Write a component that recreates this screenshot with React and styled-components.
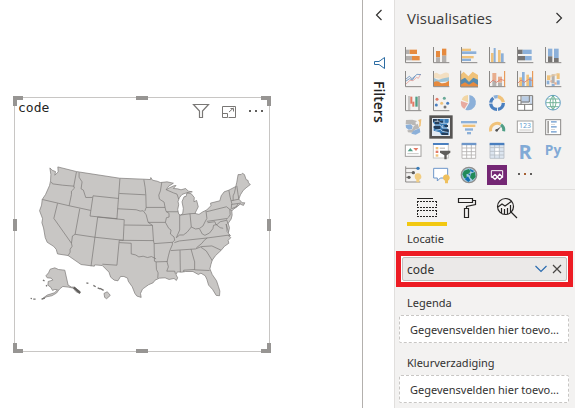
import React from "react";
import styled, { createGlobalStyle } from "styled-components";

const C = {
  orange: "#e68a3e",
  sand: "#f0c27a",
  blue: "#8cb0d9",
  navy: "#4a7fbf",
  gray: "#b3b0ae",
  dark: "#777574",
  axis: "#8a8886",
  red: "#e27a66",
  green: "#4f9f86",
};

const GlobalStyle = createGlobalStyle`
  *, *::before, *::after { box-sizing: border-box; }
  html, body, #root { height: 100%; }
  body {
    margin: 0;
    background: #fff;
    color: #323130;
    font-family: "Noto Sans", "Open Sans", sans-serif;
    font-size: 12px;
    overflow: hidden;
  }
  svg { display: block; }
`;

const Page = styled.div`
  display: flex;
  min-height: 100vh;
`;

const Canvas = styled.main`
  flex: 1;
  min-width: 0;
  padding: 97px 92px 0 14px;
`;

const Visual = styled.section`
  position: relative;
  height: 255px;
  padding: 2px 1px 0 2px;
  border: 1px solid #c8c6c4;
`;

const VisualHeader = styled.header`
  display: flex;
  align-items: flex-start;
  justify-content: space-between;
  height: 55px;
  padding: 0 2px 0 1px;
`;

const VisualTitle = styled.h2`
  margin: 0;
  color: #252423;
  font-family: "DejaVu Sans Mono", monospace;
  font-size: 13px;
  font-weight: 400;
  line-height: 16px;
`;

const VisualActions = styled.div`
  display: flex;
  gap: 10px;
  padding-top: 2px;
`;

const IconButton = styled.button`
  display: flex;
  align-items: center;
  justify-content: center;
  width: ${(p) => p.$w || 18}px;
  height: ${(p) => p.$h || 18}px;
  padding: 0;
  border: 0;
  background: transparent;
  color: ${(p) => p.$color || "#323130"};
  cursor: pointer;
`;

const MapDrawing = styled.svg`
  width: 100%;
  height: 150px;
`;

const Handle = styled.span`
  position: absolute;
  ${(p) => p.$at}
  width: ${(p) => p.$w}px;
  height: ${(p) => p.$h}px;
  border: 0 solid #979593;
  border-width: ${(p) => p.$edges};
`;

const FiltersPane = styled.aside`
  display: flex;
  flex: none;
  flex-direction: column;
  align-items: center;
  width: 33px;
  padding-top: 6px;
  border-left: 1px solid #b3b0ad;
  border-right: 1px solid #e1dfdd;
`;

const FiltersIcon = styled.svg`
  margin: 33px 0 12px 3px;
`;

const FiltersTitle = styled.h2`
  margin: 0;
  color: #252423;
  font-family: "Open Sans", sans-serif;
  font-size: 14px;
  font-weight: 600;
  line-height: 18px;
  writing-mode: vertical-rl;
`;

const Panel = styled.aside`
  flex: none;
  width: 180px;
  background: #f3f2f1;
`;

const PanelHeader = styled.header`
  display: flex;
  align-items: center;
  justify-content: space-between;
  height: 43px;
  padding: 0 7px 8px 12px;
`;

const PanelTitle = styled.h1`
  margin: 0;
  color: #3b3a39;
  font-family: "Open Sans", sans-serif;
  font-size: 15px;
  font-weight: 500;
  line-height: 24px;
`;

const Gallery = styled.div`
  display: grid;
  grid-template-columns: repeat(6, 28px);
  grid-auto-rows: 24px;
  height: 147px;
  padding-left: 4px;
  border-bottom: 1px solid #e1dfdd;
`;

const Chart = styled.button`
  display: flex;
  align-items: center;
  justify-content: center;
  padding: 0;
  border: 0;
  background: transparent;
  cursor: pointer;
`;

const Tabs = styled.div`
  display: flex;
  padding-left: 12px;
`;

const Tab = styled.button`
  display: flex;
  align-items: center;
  justify-content: center;
  width: 40px;
  height: 36px;
  padding: 0;
  border: 0;
  background: ${(p) =>
    p.$active
      ? "linear-gradient(#f2c811, #f2c811) bottom / 100% 4px no-repeat"
      : "transparent"};
  cursor: pointer;
`;

const Wells = styled.div`
  display: flex;
  flex-direction: column;
`;

const WellLabel = styled.h3`
  display: flex;
  align-items: flex-end;
  height: ${(p) => p.$h}px;
  margin: 0;
  padding: 0 0 4px 12px;
  font-size: 11px;
  font-weight: 400;
  line-height: 16px;
`;

const Highlight = styled.div`
  margin: 0 2px 0 1px;
  padding: 1px;
  border: 5px solid #ed1c24;
  background: #fff;
`;

const Field = styled.div`
  display: flex;
  align-items: center;
  height: 24px;
  padding: 0 2px 0 4px;
  border: 1px solid #c0bebc;
  border-radius: 2px;
  background: #ebe9e8;
`;

const FieldName = styled.span`
  flex: 1;
  font-size: 12px;
`;

const DropZone = styled.div`
  height: 28px;
  margin: 0 6px 0 4px;
  padding-left: 10px;
  overflow: hidden;
  border: 1px dashed #c8c6c4;
  border-radius: 2px;
  background: #fff;
  font-size: 11px;
  line-height: 28px;
  white-space: nowrap;
`;

const Axis = () => <path d="M7.500 6V53H55" fill="none" stroke={C.axis} strokeWidth="3" />;

const rects = (list) =>
  list.map(([x, y, w, h, fill], i) => <rect key={i} x={x} y={y} width={w} height={h} fill={fill} />);

const CHARTS = [
  ["Gestapeld staafdiagram", <><g>{rects([[9, 14, 11, 13, C.gray], [20, 14, 22, 13, C.orange], [9, 33, 18, 13, C.gray], [27, 33, 23, 13, C.orange]])}</g><Axis /></>],
  ["Gestapeld kolomdiagram", <><g>{rects([[15, 18, 12, 19, C.orange], [15, 37, 12, 15, C.gray], [33, 11, 13, 21, C.orange], [33, 32, 13, 20, C.gray]])}</g><Axis /></>],
  ["Gegroepeerd staafdiagram", <><g>{rects([[9, 11, 27, 7, C.sand], [9, 19, 43, 8, C.blue], [9, 33, 35, 7, C.sand], [9, 41, 27, 7, C.blue]])}</g><Axis /></>],
  ["Gegroepeerd kolomdiagram", <><g>{rects([[12, 24, 8, 28, C.sand], [20, 9, 6, 43, C.blue], [33, 15, 8, 37, C.sand], [42, 25, 8, 27, C.blue]])}</g><Axis /></>],
  ["100% gestapeld staafdiagram", <><g>{rects([[9, 14, 14, 13, C.dark], [23, 14, 27, 13, C.blue], [9, 33, 21, 13, C.dark], [30, 33, 20, 13, C.blue]])}</g><Axis /></>],
  ["100% gestapeld kolomdiagram", <><g>{rects([[15, 11, 13, 23, C.blue], [15, 34, 13, 18, C.dark], [33, 11, 14, 28, C.blue], [33, 39, 14, 13, C.dark]])}</g><Axis /></>],
  ["Lijndiagram", <><path d="M9 45L21 34L30 35L41 25L46 28L53 15" fill="none" stroke="#e7a199" strokeWidth="2.500" /><path d="M9 30L19 22L27 29L42 16L54 17M9 36L20 29L28 33L36 22" fill="none" stroke="#668fbd" strokeWidth="2.500" /><Axis /></>],
  ["Vlakdiagram", <><path d="M9 14Q15 9 22 14T37 13T54 14V28L42 31L28 29L9 27Z" fill="#f3dfc1" /><path d="M9 27Q21 34 28 31T54 25V37L9 41Z" fill="#9fc4d6" /><path d="M9 39Q18 34 28 41Q39 46 54 35V52H9Z" fill={C.orange} /><Axis /></>],
  ["Gestapeld vlakdiagram", <><path d="M4 17L14 8L28 22L41 8L57 18V53H4Z" fill={C.sand} /><path d="M4 34L18 26L30 39L43 26L57 32V53H4Z" fill="#568bb0" /><path d="M4 47L18 40L30 47L43 39L57 48V53H4Z" fill={C.orange} /><path d="M5 5V54H57" fill="none" stroke={C.axis} strokeWidth="3" /></>],
  ["Lijn- en gestapeld kolomdiagram", <><g>{rects([[16, 12, 12, 23, "#e8ad8d"], [16, 35, 12, 17, C.gray], [33, 23, 12, 18, "#e8ad8d"], [33, 41, 12, 11, C.gray]])}</g><path d="M9 42L18 33L28 40L41 31L53 35" fill="none" stroke={C.red} strokeWidth="2.500" /><Axis /><path d="M53 6V53" stroke={C.orange} strokeWidth="3" /></>],
  ["Lijn- en gegroepeerd kolomdiagram", <><g>{rects([[13, 25, 9, 27, C.sand], [21, 9, 8, 43, C.blue], [34, 17, 8, 35, C.sand], [42, 25, 8, 27, C.blue]])}</g><path d="M9 42L18 33L28 40L41 31L53 35" fill="none" stroke={C.red} strokeWidth="2.500" /><Axis /><path d="M53 6V53" stroke={C.orange} strokeWidth="3" /></>],
  ["Lintdiagram", <><g>{rects([[12, 19, 10, 14, C.sand], [26, 16, 9, 17, C.gray], [41, 13, 9, 17, C.sand], [11, 35, 8, 11, C.blue], [25, 33, 10, 10, C.gray], [41, 34, 9, 13, C.blue], [22, 34, 4, 6, "#e8ad8d"], [34, 40, 7, 7, "#e8ad8d"], [26, 45, 9, 7, C.blue]])}</g><path d="M20 23C27 23 26 18 33 18S41 17 45 15" fill="none" stroke="#e9c99e" strokeWidth="6" opacity=".7" /><Axis /></>],
  ["Watervaldiagram", <><g>{rects([[15, 9, 7, 43, "#c8c6c4"], [22, 11, 6, 21, C.red], [28, 26, 6, 15, C.red], [37, 11, 7, 30, C.green], [45, 9, 6, 43, "#b3b0ae"]])}</g><Axis /></>],
  ["Spreidingsdiagram", <><g><circle cx="18" cy="19" r="4.500" fill={C.red} /><circle cx="40" cy="16" r="4.500" fill="#68a997" /><circle cx="16" cy="36" r="4.500" fill={C.navy} /><circle cx="32" cy="31" r="4.500" fill={C.sand} /><circle cx="50" cy="31" r="4.500" fill={C.navy} /><circle cx="42" cy="42" r="4.500" fill={C.dark} /></g><Axis /></>],
  ["Cirkeldiagram", <><path d="M31 29V6A23 23 0 1 1 19 50Z" fill={C.blue} /><path d="M27 28L8 20A22 22 0 0 1 27 6Z" fill="#f2d6a4" /><path d="M27 31L16 48A23 23 0 0 1 6 24Z" fill="#e7aaa0" /></>],
  ["Ringdiagram", <g fill="none" strokeWidth="10"><path d="M32 11A19 19 0 0 1 43 17" stroke={C.sand} /><path d="M42 16A19 19 0 0 1 49 28" stroke={C.sand} /><path d="M49 30A19 19 0 0 1 33 49" stroke={C.navy} /><path d="M30 49A19 19 0 0 1 11 32" stroke={C.navy} /><path d="M11 29A19 19 0 0 1 19 15" stroke={C.navy} /><path d="M21 13A19 19 0 0 1 32 11" stroke={C.blue} /></g>],
  ["Treemap", <><rect x="8" y="8" width="45" height="44" fill="#fff" /><rect x="20" y="10" width="22" height="19" fill="#b9cce4" /><rect x="44" y="10" width="8" height="24" fill="#cad8eb" /><path d="M8 8H53V52H8ZM8 34H53M18 8V34M8 22H18M43 8V27H18M29 34V52" fill="none" stroke="#797775" strokeWidth="3" /></>],
  ["Kaart", <><circle cx="30" cy="29" r="22" fill="#fff" stroke="#5f9cc2" strokeWidth="3" /><path d="M12 18H48M9 29H51M13 41H47M30 8Q12 29 30 50Q48 29 30 8M30 8V50" fill="none" stroke="#62a98c" strokeWidth="2.500" /></>],
  ["Choropletenkaart", <><path d="M9 9L28 8L42 12L37 17L40 23L30 25L25 22L8 22Z" fill="#b9b7b5" /><path d="M8 24L23 22L29 28L27 37L17 38L9 32Z" fill={C.blue} /><path d="M45 9L55 6L53 27L48 30L49 16Z" fill={C.sand} /><path d="M13 40L27 38L33 26L44 20L49 34L36 38L27 47L15 46Z" fill="#b9b7b5" /><path d="M31 41L50 34L52 46L38 53L25 50Z" fill={C.blue} /></>],
  ["Vlakkenkaart", <><rect x="-1" y="-1" width="62" height="62" fill="#e3eaf2" stroke="#565453" strokeWidth="8" /><path d="M6 6H53V16L48 20V33L53 39V54H31L26 46L8 41V29L12 24L6 16Z" fill="#397bb7" /><path d="M6 6H26V11H36V17H24V22H12V15H6M8 27H28V36H13L8 32M39 24H51V30H42M34 37H53V45H40V41H34M29 47H51V54H34" fill="#243d59" /><path d="M10 13H23L30 19H49M8 24H28L34 33H50M19 7V13M39 7V18M13 40L28 37L34 43L50 46M35 24V33" fill="none" stroke="#dce8f4" strokeWidth="2" /></>],
  ["Trechter", <g>{rects([[6, 12, 48, 7, C.blue], [11, 23, 38, 7, C.sand], [18, 34, 24, 7, C.blue], [24, 45, 12, 7, C.blue]])}</g>],
  ["Meter", <><g fill="none" strokeWidth="9"><path d="M11 43A20 20 0 0 1 41 22" stroke={C.sand} /><path d="M42 23A20 20 0 0 1 50 43" stroke={C.green} /></g><path d="M27 38L43 28L31 43Z" fill="#555" /><circle cx="29" cy="40" r="4" fill="#555" /></>],
  ["Kaart met getal", <><rect x="7" y="12" width="47" height="34" fill="#fff" stroke="#a19f9d" strokeWidth="3" /><text x="30" y="32" textAnchor="middle" fill="#5c9acd" fontFamily="Open Sans" fontSize="21">123</text><path d="M13 39H48" stroke="#c8c6c4" strokeWidth="3" /></>],
  ["Kaart met meerdere rijen", <><rect x="8" y="8" width="45" height="45" fill="#fff" stroke="#8a8886" strokeWidth="3" /><g>{rects([[13, 12, 5, 37, "#a3a19f"], [24, 12, 17, 5, C.blue], [24, 21, 12, 2, "#c8c6c4"], [24, 27, 17, 5, C.blue], [24, 37, 12, 2, "#c8c6c4"], [24, 42, 17, 5, C.blue]])}</g></>],
  ["KPI", <><rect x="7" y="12" width="47" height="34" fill="#fff" stroke="#a19f9d" strokeWidth="3" /><path d="M14 31L22 21L30 31Z" fill={C.green} /><path d="M31 21H46L39 30Z" fill={C.red} /><path d="M13 38H47" stroke="#c8c6c4" strokeWidth="3" /></>],
  ["Slicer", <><rect x="7" y="8" width="45" height="43" fill="#fff" stroke="#c8c6c4" strokeWidth="3" /><path d="M6 9H53" stroke={C.navy} strokeWidth="6" /><g>{rects([[14, 18, 8, 7, C.sand], [14, 29, 8, 7, C.red], [14, 40, 8, 7, C.sand], [26, 20, 16, 3, C.gray]])}</g><path d="M27 29H58V35L47 43V55H40V43L27 35Z" fill="#605e5c" /></>],
  ["Tabel", <><rect x="9" y="8" width="41" height="43" fill="#fff" /><path d="M9 21H50M9 32H50M9 42H50M9 8V52H50V8M23 10V52M37 10V52" fill="none" stroke="#b3b0ae" strokeWidth="2.500" /><path d="M8 9H52" stroke="#6d96c9" strokeWidth="7" /></>],
  ["Matrix", <><rect x="9" y="8" width="42" height="44" fill="#dde6f0" /><rect x="23" y="21" width="15" height="22" fill="#fff" /><path d="M9 20H51M9 31H51M9 42H51M9 8V52H51V8M23 10V52M37 10V52" fill="none" stroke="#b6bdc4" strokeWidth="2.500" /><path d="M8 9H52" stroke={C.navy} strokeWidth="7" /></>],
  ["R-visual", <text x="30" y="53" textAnchor="middle" fill="#82aad6" fontFamily="Open Sans" fontSize="60" fontWeight="700">R</text>],
  ["Python-visual", <text x="30" y="42" textAnchor="middle" fill="#82aad6" fontFamily="Open Sans" fontSize="41" fontWeight="700">Py</text>],
  ["Belangrijkste beïnvloeders", <><path d="M8 4V51H52M9 10H46M9 23H29M9 37H17" fill="none" stroke="#797775" strokeWidth="2.500" /><circle cx="45" cy="10" r="5" fill="#397bb7" /><circle cx="31" cy="23" r="5" fill="#605e5c" /><circle cx="18" cy="37" r="5" fill="#605e5c" /><path d="M35 35A10 10 0 1 1 49 44V52H40V44Q35 41 35 35" fill="#f1cd82" /></>],
  ["Vragen en antwoorden", <><path d="M8 10H50V39H28L19 48V39H8Z" fill="#fff" stroke="#6d96c9" strokeWidth="3" /><path d="M36 39A10 10 0 1 1 51 47V55H42V47Q36 44 36 39" fill="#efc05d" /></>],
  ["ArcGIS Maps", <><circle cx="30" cy="30" r="23" fill="#a5cbe0" stroke="#918f8d" strokeWidth="4" /><path d="M15 17L29 12L35 19L29 26L22 28L24 38L16 40L10 28ZM37 25L48 21L50 36L41 45L33 37Z" fill="#218a58" /><path d="M31 11L46 18L40 22L34 17M17 42L27 34L34 46L28 51ZM27 29L33 25L35 32Z" fill="#126fb1" /></>],
  ["Power Apps", <><rect width="60" height="60" fill="#742774" /><path d="M18 37H13V17H47V37H42" fill="none" stroke="#fff" strokeWidth="3" /><path d="M25 28L16 36L24 43L31 36L38 28L46 36L38 43L31 36L24 28" fill="none" stroke="#fff" strokeWidth="4" /></>],
  ["Meer opties", <g>{rects([[9, 24, 6, 6, "#605e5c"], [27, 24, 6, 6, "#a66032"], [45, 24, 6, 6, "#605e5c"]])}</g>],
];

const LAND =
  "M90 38L97 45L107 49L105 60L115 50L114 35L170 49L300 69L373 72L393 73L394 67L399 75L413 78L423 82L443 80L462 84L448 93L440 104L450 98L463 92L470 91L462 100L475 101L485 104L499 100L507 108L519 110L502 113L488 118L480 128L476 139L478 149L475 163L478 177L483 180L490 176L492 160L488 140L494 125L500 124L503 113L516 116L525 127L524 140L532 136L537 155L532 165L527 175L539 178L551 170L562 165L575 152L574 144L602 137L606 122L615 110L629 105L650 94L653 81L657 58L666 58L670 54L676 58L681 73L687 76L688 83L694 88L681 98L672 106L664 119L659 132L664 137L669 143L677 143L673 151L663 147L654 155L642 163L638 168L639 180L636 192L627 205L631 218L628 233L621 207L624 230L634 242L628 242L635 248L627 256L629 265L616 274L606 286L589 302L579 316L575 329L572 342L579 359L592 378L598 396L602 409L601 423L591 422L580 404L568 391L563 374L558 363L545 355L537 359L521 350L499 350L487 352L474 351L470 360L475 369L471 377L464 371L449 374L437 369L420 370L407 376L401 384L387 390L369 403L363 416L365 428L352 424L346 416L338 396L326 379L324 370L313 365L303 365L295 378L284 376L273 367L268 352L248 332L225 330L224 334L184 329L145 302L113 297L109 283L101 274L82 262L76 248L71 219L66 203L68 191L59 167L65 150L67 133L77 118L89 91L92 77L93 58Z";

const BORDERS =
  "M94 80L98 86L128 90L163 93M170 50L162 93L164 99L155 108L155 118L148 152M67 133L148 152L213 166M113 145L102 190L155 265M180 161L166 238L158 243L155 265L157 274L151 283L151 292L145 302M178 52L178 66L187 80L184 101L191 105L198 127L218 127M220 122L297 130M220 122L211 183L293 191M301 70L292 191M234 186L314 194L311 256L227 247L166 238M234 186L214 334M299 256L292 331L248 328M299 263L335 265L335 297L348 300L358 306L371 304L384 308L396 305L410 312M299 256L403 257M314 210L399 211M294 161L350 164L362 168L371 167L380 179L386 202L399 211L402 257L404 266M299 115L378 119M373 73L377 97L379 119L380 157L376 168M380 157L437 157M386 202L438 202M427 82L423 107L418 120L420 132L434 141L437 157L440 169L449 175L449 186L441 188L438 202L448 220L455 225L453 237L464 246L466 256L459 262L459 269L451 288L447 303L443 321L447 336L442 349L466 349L468 357M441 104L462 113L473 117L478 132M441 170L476 170M481 180L481 225L471 248M512 176L516 216M483 180L512 176L528 175M471 248L481 240L492 240L503 232L516 216L529 222L541 220L551 213L557 201L563 190L560 166M562 170L622 155L632 163L638 167M632 163L633 179L627 188M563 199L626 190M541 222L549 237L557 241L571 234L581 221L583 211L594 208L603 200L622 196M565 203L587 200L590 208L603 218L612 220M465 263L480 258L564 249L632 240M404 266L459 262M404 266L405 319L410 321L444 320M410 321L411 344L416 354L415 370M454 287L529 282L546 275L578 273L606 286M564 249L555 256L548 265L531 279M545 277L561 288L579 317M482 286L483 352M515 282L526 321L526 345L571 347M493 351L493 346L526 344M629 105L633 126L638 145L636 161M650 94L646 113L642 122L642 136M653 92L657 119L659 131M636 137L660 132M637 148L665 144M656 147L651 156M637 161L651 155M622 193L627 207";

const ALASKA =
  "M78 363L86 354L91 343L105 339L116 344L135 346L145 391L155 397L164 397L173 404L181 410L180 416L169 411L160 400L145 397L129 395L119 403L110 415L96 423L81 426L66 433L82 421L104 414L113 405L105 404L98 407L93 398L84 391L85 380L99 376L94 370L82 369Z";

function UsMap() {
  return (
    <MapDrawing viewBox="-9 0 756 450" preserveAspectRatio="xMidYMid meet" role="img" aria-label="Verenigde Staten">
      <g fill="#c8c6c4" stroke="#767472" strokeWidth="2" strokeLinejoin="round">
        <path d={LAND} />
        <path d={ALASKA} />
        <path d="M253 416L263 411L272 422L261 432L255 428Z" />
        <path d={BORDERS} fill="none" />
      </g>
      <g fill="none" stroke="#767472" strokeWidth="4">
        <path d="M163 398L181 413M200 384L206 386M221 392L228 396M234 399L241 402M241 401L252 407M69 376L74 378M32 431L36 432M40 433L47 433M65 433L75 430M78 392L82 394" />
      </g>
      <path d="M162 398L181 415" stroke="#5f5d5b" strokeWidth="6" />
    </MapDrawing>
  );
}

const Chevron = ({ d, w, h, color = "currentColor" }) => (
  <svg width={w} height={h} viewBox={`0 0 ${w} ${h}`} fill="none" stroke={color} strokeWidth="1.200">
    <path d={d} />
  </svg>
);

const HANDLES = [
  ["top:-2px;left:-2px;", 10, 10, "4px 0 0 4px"],
  ["top:-2px;right:-2px;", 10, 10, "4px 4px 0 0"],
  ["bottom:-2px;left:-2px;", 10, 10, "0 0 4px 4px"],
  ["bottom:-2px;right:-2px;", 10, 10, "0 4px 4px 0"],
  ["top:-2px;left:calc(50% - 6px);", 12, 4, "4px 0 0 0"],
  ["bottom:-2px;left:calc(50% - 6px);", 12, 4, "4px 0 0 0"],
  ["left:-2px;top:calc(50% - 6px);", 4, 12, "0 0 0 4px"],
  ["right:-2px;top:calc(50% - 6px);", 4, 12, "0 0 0 4px"],
];

const DROP_TEXT = "Gegevensvelden hier toevo...";

export default function App() {
  return (
    <>
      <GlobalStyle />
      <Page>
        <Canvas>
          <Visual>
            <VisualHeader>
              <VisualTitle>code</VisualTitle>
              <VisualActions>
                <IconButton aria-label="Filters op visual" $color="#797775">
                  <svg width="18" height="18" viewBox="0 0 18 18" fill="none" stroke="currentColor" strokeWidth="1.200">
                    <path d="M1.500 2.500H16.500L10.500 9V15.500H7.500V9Z" />
                  </svg>
                </IconButton>
                <IconButton aria-label="Focusmodus" $color="#797775">
                  <svg width="18" height="18" viewBox="0 0 18 18" fill="none" stroke="currentColor">
                    <path d="M2.500 9V4.500H15.500V15.500H8.500M2.500 11.500H7.500V15.500H2.500ZM9 10L13.500 6M10.500 6.500H13.500V9.500M2.500 9V12" />
                  </svg>
                </IconButton>
                <IconButton aria-label="Meer opties" $color="#605e5c">
                  <svg width="18" height="18" viewBox="0 0 18 18" fill="currentColor">
                    <path d="M1 8h2v2H1zM7 8h2v2H7zM13 8h2v2H13z" />
                  </svg>
                </IconButton>
              </VisualActions>
            </VisualHeader>
            <UsMap />
            {HANDLES.map(([at, w, h, edges]) => (
              <Handle key={at} $at={at} $w={w} $h={h} $edges={edges} />
            ))}
          </Visual>
        </Canvas>

        <FiltersPane>
          <IconButton aria-label="Filters uitvouwen">
            <Chevron w={8} h={12} d="M6.500 1L1.500 6L6.500 11" />
          </IconButton>
          <FiltersIcon width="12" height="12" viewBox="0 0 12 12" fill="none" stroke="#2b6ca3">
            <path d="M10.500 0.500V11.500L5 7.500H.5V4.500H5Z" />
          </FiltersIcon>
          <FiltersTitle>Filters</FiltersTitle>
        </FiltersPane>

        <Panel>
          <PanelHeader>
            <PanelTitle>Visualisaties</PanelTitle>
            <IconButton aria-label="Visualisaties samenvouwen">
              <Chevron w={8} h={12} d="M1.500 1L6.500 6L1.500 11" />
            </IconButton>
          </PanelHeader>
          <Gallery>
            {CHARTS.map(([name, art]) => (
              <Chart key={name} aria-label={name}>
                <svg width="20" height="20" viewBox="0 0 60 60" overflow="visible">
                  {art}
                </svg>
              </Chart>
            ))}
          </Gallery>
          <Tabs role="tablist">
            <Tab role="tab" aria-selected="true" aria-label="Velden" $active>
              <svg width="22" height="20" viewBox="0 0 22 20" fill="none" stroke="#252423">
                <path d="M1 .5H17" />
                <path d="M1 3.500H21M1 9.500H21M1 12.500H21M1 18.500H21M1.500 3V10M20.500 3V10M1.500 12V19M20.500 12V19" strokeDasharray="2 1" />
              </svg>
            </Tab>
            <Tab role="tab" aria-selected="false" aria-label="Opmaak">
              <svg width="20" height="20" viewBox="0 0 20 20" fill="none" stroke="#252423" strokeWidth="1.200">
                <path d="M1.500 .5H15.500V4.500H1.500ZM15.500 2.500H18.500V6.500L9.500 8.500V10.500M7.500 10.500H11.500V19.500H7.500Z" />
              </svg>
            </Tab>
            <Tab role="tab" aria-selected="false" aria-label="Analyse">
              <svg width="22" height="22" viewBox="0 0 22 22" fill="none" stroke="#252423" strokeWidth="1.200">
                <circle cx="9.500" cy="9.500" r="8" />
                <path d="M15 15L21 21M2 10L6 7L9 9L16 4M5.500 11V16M8.500 12V17M11.500 11V17M14.500 8V15" />
              </svg>
            </Tab>
          </Tabs>
          <Wells>
            <WellLabel $h={25}>Locatie</WellLabel>
            <Highlight>
              <Field>
                <FieldName>code</FieldName>
                <IconButton aria-label="Veldopties" $color="#2b6cb0">
                  <Chevron w={12} h={8} d="M.5 1L6 6.500L11.500 1" />
                </IconButton>
                <IconButton aria-label="Veld verwijderen" $w={14} $color="#484644">
                  <Chevron w={10} h={10} d="M1 1L9 9M9 1L1 9" />
                </IconButton>
              </Field>
            </Highlight>
            <WellLabel $h={28}>Legenda</WellLabel>
            <DropZone>{DROP_TEXT}</DropZone>
            <WellLabel $h={32}>Kleurverzadiging</WellLabel>
            <DropZone>{DROP_TEXT}</DropZone>
          </Wells>
        </Panel>
      </Page>
    </>
  );
}
